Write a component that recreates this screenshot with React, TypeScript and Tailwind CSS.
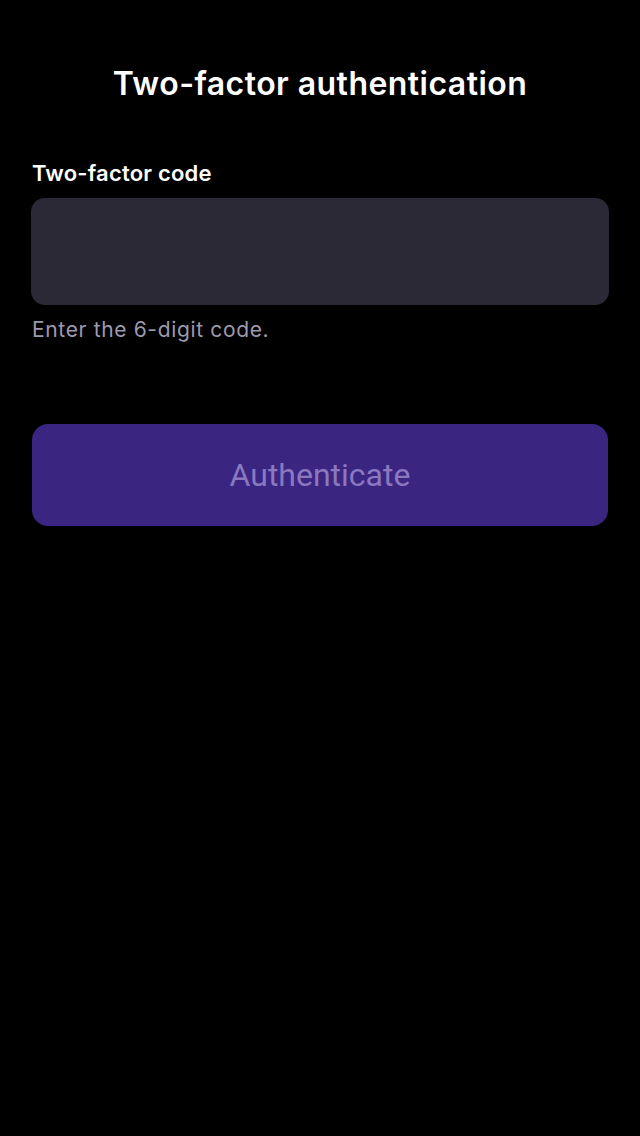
import React from "react";

export default function App() {
  return (
    <div className="min-h-[1136px] w-[640px] bg-black text-white" style={{ fontFamily: "Inter, 'Noto Sans', sans-serif" }}>
      <div className="flex flex-col px-[32px]">
        <h1 className="mt-[62px] text-center text-[32px] font-semibold leading-[44px] tracking-[0.45px]">Two-factor authentication</h1>
        <label className="mt-[53px] text-[22px] font-semibold leading-[28px] tracking-[0.2px]">Two-factor code</label>
        <div className="mt-[11px] -mx-[1px] h-[107px] rounded-[14px] bg-[#2a2935]" />
        <p className="mt-[11px] text-[21px] leading-[28px] tracking-[0.65px] text-[#9d9aae]">Enter the 6-digit code.</p>
        <button className="mt-[80px] flex h-[102px] items-center justify-center rounded-[16px] bg-[#3a2680] text-[32px] text-[#8a78c0]" style={{ fontFamily: "Roboto, sans-serif" }}>
          Authenticate
        </button>
      </div>
    </div>
  );
}
